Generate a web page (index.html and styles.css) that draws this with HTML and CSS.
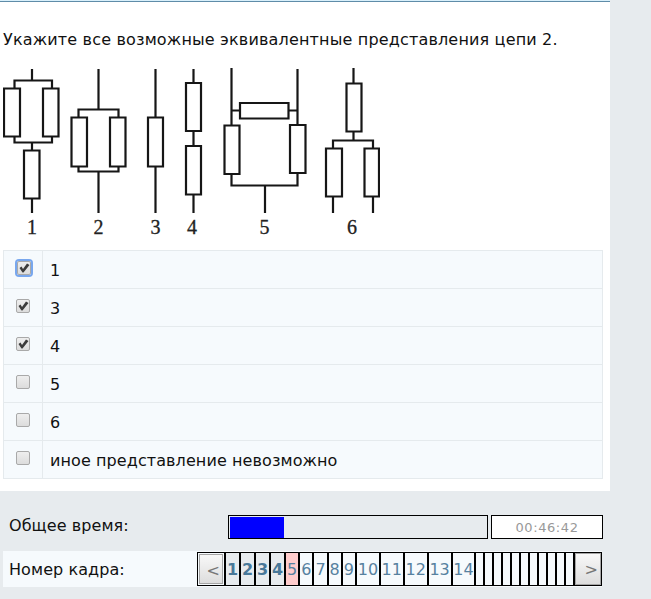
FILE: index.html
```html
<!DOCTYPE html>
<html lang="ru">
<head>
<meta charset="utf-8">
<title>Тест</title>
<link rel="stylesheet" href="styles.css">
</head>
<body>
<main class="question">
  <p class="prompt">Укажите все возможные эквивалентные представления цепи 2.</p>
  <svg class="circuits" width="377" height="170" viewBox="3 67 377 170">
    <g fill="none" stroke="#161616" stroke-width="2.2">
      <path d="M32 69V80M14.500 88V80.500H52V88M14.500 137V142.500H52V137M32 142V150M32 199V213"/>
      <path d="M4 88.500H20V136.500H4ZM43 88.500H58.500V136.500H43ZM24 150.500H39.500V198.500H24Z"/>
      <path d="M98.500 69V109.500M78.500 117V109.500H118.500V117M78.500 166V171.500H118.500V166M98.500 171V213"/>
      <path d="M71.500 117.500H87V166.500H71.500ZM110 117.500H125.500V166.500H110Z"/>
      <path d="M155.500 69V117M155.500 166V213M148 117.500H163V166.500H148Z"/>
      <path d="M193.500 69V83M193.500 131V146M193.500 195V213M186 83H201V131H186ZM186 146H201V194.500H186Z"/>
      <path d="M231.500 68V125M297.500 69V125M231.500 110.500H240M289 110.500H297M231.500 174V185.500H297.500V173M265 185V213"/>
      <path d="M240 103H288.500V118.500H240ZM224.500 125.500H239.500V174H224.500ZM290 125H305.500V173H290Z"/>
      <path d="M353.500 68V83M353.500 132V140M333 148V140.500H373V148M333 197V213M373 197V213"/>
      <path d="M346.500 83.500H361.500V131.500H346.500ZM326 148.500H342V196.500H326ZM364.500 148.500H379V196.500H364.500Z"/>
    </g>
    <g class="labels">
      <text x="32" y="234">1</text><text x="98.500" y="234">2</text><text x="155.500" y="234">3</text><text x="192" y="234">4</text><text x="264.500" y="234">5</text><text x="352" y="234">6</text>
    </g>
  </svg>
  <div class="answers">
    <label class="row"><span class="pick"><span class="box focus"><svg width="14" height="14" viewBox="0 0 14 14"><path d="M2.500 7 4.500 5.500 6 8 10 2.500 12.500 4 6.500 11.500H5.500Z"/></svg></span></span><span class="answer">1</span></label>
    <label class="row"><span class="pick"><span class="box"><svg width="14" height="14" viewBox="0 0 14 14"><path d="M2.500 7 4.500 5.500 6 8 10 2.500 12.500 4 6.500 11.500H5.500Z"/></svg></span></span><span class="answer">3</span></label>
    <label class="row"><span class="pick"><span class="box"><svg width="14" height="14" viewBox="0 0 14 14"><path d="M2.500 7 4.500 5.500 6 8 10 2.500 12.500 4 6.500 11.500H5.500Z"/></svg></span></span><span class="answer">4</span></label>
    <label class="row"><span class="pick"><span class="box"></span></span><span class="answer">5</span></label>
    <label class="row"><span class="pick"><span class="box"></span></span><span class="answer">6</span></label>
    <label class="row"><span class="pick"><span class="box"></span></span><span class="answer">иное представление невозможно</span></label>
  </div>
</main>
<footer class="status">
  <div class="time">
    <span class="caption">Общее время:</span>
    <div class="progress"><div class="bar"></div></div>
    <div class="clock">00:46:42</div>
  </div>
  <div class="frames">
    <span class="caption">Номер кадра:</span>
    <nav class="pager">
      <a class="step prev"><b>&lt;</b></a>
      <a class="n done">1</a><a class="n done">2</a><a class="n done">3</a><a class="n done">4</a>
      <a class="n current">5</a><a class="n">6</a><a class="n">7</a><a class="n">8</a><a class="n">9</a>
      <a class="n wide">10</a><a class="n wide">11</a><a class="n wide">12</a><a class="n wide">13</a><a class="n wide">14</a>
      <i></i><i></i><i></i><i></i><i></i><i></i><i></i><i></i><i></i><i></i><i></i>
      <a class="step next"><b>&gt;</b></a>
    </nav>
  </div>
</footer>
</body>
</html>
```
FILE: styles.css
```css
* { box-sizing: border-box; }
body {
  margin: 0;
  height: 599px;
  overflow: hidden;
  background: #e7ebee;
  color: #111;
  font: 16px/20px Verdana, "DejaVu Sans", sans-serif;
}
.question {
  width: 610px;
  height: 491px;
  padding-left: 3px;
  background: #fff;
  border-top: 1px solid #d9f0fb;
  box-shadow: inset 0 1px #5f8ca8;
}
.prompt { margin: 0; padding-top: 29px; height: 66px; white-space: nowrap; letter-spacing: .165px; }
.circuits { display: block; }
.labels { font: 20px "Liberation Serif", serif; fill: #222; stroke: #222; stroke-width: .3px; text-anchor: middle; }
.answers {
  width: 600px;
  margin-top: 13px;
  border: 1px solid #e5eaed;
  border-bottom: 0;
  background: #f6fafd;
}
.row { display: flex; height: 38px; border-bottom: 1px solid #e5eaed; }
.pick { width: 39px; padding: 10px 0 0 12px; border-right: 1px solid #e5eaed; }
.box {
  display: block;
  width: 14px;
  height: 14px;
  border: 1px solid #a9a9a9;
  border-radius: 2px;
  background: linear-gradient(#eee, #dcdcdc);
}
.box svg { display: block; margin: -1px; fill: #3c3c3c; }
.focus { margin-left: 1px; box-shadow: 0 0 0 2px #78a7ee; }
.answer { padding: 10px 0 0 7px; letter-spacing: .09px; }
.status { padding: 24px 0 0 3px; }
.time { display: flex; height: 24px; }
.caption { width: 225px; padding: 1px 0 0 6px; letter-spacing: .08px; white-space: nowrap; }
.time .caption { padding-top: 1px; }
.progress { width: 260px; height: 24px; border: 1px solid #000; padding: 1px; }
.bar { width: 54px; height: 21px; background: #00f; }
.clock {
  width: 112px;
  height: 24px;
  margin-left: 3px;
  border: 1px solid #000;
  background: #fff;
  color: #999;
  font-size: 13px;
  line-height: 23px;
  letter-spacing: .6px;
  text-align: center;
}
.frames { display: flex; align-items: center; width: 599px; height: 36px; margin-top: 12px; background: #f6fafd; }
.frames .caption { width: 194px; }
.pager { display: flex; width: 405px; height: 34px; border: 1px solid #000; background: #f6fafd; }
.pager i { width: 9px; border-right: 2px solid #000; }
.n { width: 14.2px; border-right: 2px solid #000; color: #5681a0; line-height: 33px; white-space: nowrap; display: flex; justify-content: center; }
.done { width: 15px; background: #e7ebee; font-weight: bold; color: #487899; }
.current { background: #fcc; }
.wide { width: 23.9px; }
.step { width: 28px; padding: 1px; border-right: 2px solid #000; color: #777; line-height: 31px; }
.step b { display: block; height: 30px; border: 1px solid #a5a5a5; background: linear-gradient(#f8f8f8, #ddd); font-weight: normal; text-align: right; padding-right: 2px; }
.next { flex: 1; padding: 0; border: 0; }
.next b { height: 32px; }
```
